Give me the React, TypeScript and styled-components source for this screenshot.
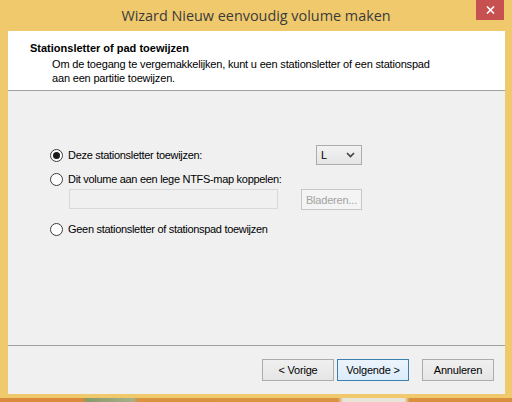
import React from "react"
import styled, { createGlobalStyle } from "styled-components"

const GlobalStyle = createGlobalStyle`
  html, body {
    margin: 0;
    padding: 0;
    width: 512px;
    height: 402px;
    overflow: hidden;
  }
  body {
    font-family: "Liberation Sans", Arial, sans-serif;
  }
`

const Frame = styled.div`
  width: 512px;
  height: 402px;
  display: flex;
  flex-direction: column;
  background: #f0c96d;
`

const TitleBar = styled.div`
  height: 31px;
  display: flex;
  align-items: flex-start;
  padding: 0 8px 0 8px;
  box-sizing: border-box;
`

const Title = styled.div`
  flex: 1;
  text-align: center;
  font-family: "Open Sans", "Noto Sans", sans-serif;
  font-size: 14.4px;
  color: #3b3b3b;
  line-height: 31px;
  padding-left: 28px;
`

const CloseButton = styled.div`
  width: 28px;
  height: 20px;
  background: #c75050;
  display: flex;
  align-items: center;
  justify-content: center;
`

const Client = styled.div`
  margin: 0 7px 0 8px;
  height: 363px;
  display: flex;
  flex-direction: column;
  background: #f0f0f0;
`

const Header = styled.div`
  height: 60px;
  box-sizing: border-box;
  background: #ffffff;
  border-bottom: 1px solid #a0a0a0;
  padding: 11px 0 0 22px;
`

const Heading = styled.div`
  font-weight: bold;
  font-size: 11px;
  color: #000;
  line-height: 13px;
`

const Description = styled.div`
  font-size: 11px;
  color: #000;
  line-height: 14px;
  padding-left: 22px;
  margin-top: 2px;
  letter-spacing: -0.18px;
`

const Body = styled.div`
  flex: 1;
  display: flex;
  flex-direction: column;
  padding: 54px 0 0 42px;
  border-bottom: 1px solid #a0a0a0;
`

const Row = styled.div<{ $height: number; $top?: number }>`
  width: 312px;
  height: ${(p) => p.$height}px;
  margin-top: ${(p) => p.$top ?? 0}px;
  display: flex;
  align-items: center;
  justify-content: space-between;
`

const Option = styled.label`
  display: flex;
  align-items: center;
  gap: 5px;
  font-size: 11px;
  color: #000;
  letter-spacing: -0.3px;
  white-space: nowrap;
`

const Radio = styled.span<{ $checked?: boolean }>`
  width: 11px;
  height: 11px;
  border-radius: 50%;
  border: 1px solid #3c3c3c;
  background: #fff;
  display: flex;
  align-items: center;
  justify-content: center;
  flex: none;
  &::after {
    content: "";
    width: 7px;
    height: 7px;
    border-radius: 50%;
    background: ${(p) => (p.$checked ? "#1a1a1a" : "transparent")};
  }
`

const Select = styled.div`
  width: 46px;
  height: 20px;
  box-sizing: border-box;
  border: 1px solid #acacac;
  background: linear-gradient(#f2f2f2, #e5e5e5);
  display: flex;
  align-items: center;
  justify-content: space-between;
  padding: 0 6px 0 4px;
  font-size: 11px;
  color: #000;
`

const PathRow = styled.div`
  display: flex;
  gap: 23px;
  margin: 2px 0 0 19px;
`

const PathInput = styled.div`
  width: 209px;
  height: 20px;
  box-sizing: border-box;
  border: 1px solid #d9d9d9;
  background: #f0f0f0;
`

const DisabledButton = styled.div`
  width: 61px;
  height: 21px;
  box-sizing: border-box;
  border: 1px solid #c7c7c7;
  background: #f4f4f4;
  color: #a2a2a2;
  font-size: 11px;
  letter-spacing: -0.2px;
  display: flex;
  align-items: center;
  justify-content: center;
`

const Footer = styled.div`
  height: 48px;
  box-sizing: border-box;
  display: flex;
  justify-content: flex-end;
  align-items: flex-start;
  padding: 13px 11px 0 0;
`

const Button = styled.div<{ $focused?: boolean; $gap?: number }>`
  width: 72px;
  height: 22px;
  box-sizing: border-box;
  margin-left: ${(p) => p.$gap ?? 0}px;
  border: 1px solid ${(p) => (p.$focused ? "#3c7fb1" : "#acacac")};
  background: ${(p) =>
    p.$focused ? "linear-gradient(#ecf4fc, #dcecfc)" : "linear-gradient(#f0f0f0, #e5e5e5)"};
  font-size: 11px;
  color: #000;
  letter-spacing: -0.2px;
  display: flex;
  align-items: center;
  justify-content: center;
`

const BottomBorder = styled.div`
  height: 4px;
`

const Taskbar = styled.div`
  height: 4px;
  background: linear-gradient(
    90deg,
    #d98a3c 0%,
    #d98a3c 16%,
    #8a9a6a 17%,
    #a6b08a 26%,
    #d9933f 27%,
    #da9340 66%,
    #e8e4d8 67%,
    #e8e4d8 79%,
    #d98f3e 80%,
    #d98f3e 100%
  );
`

function Chevron() {
  return (
    <svg width="9" height="6" viewBox="0 0 9 6">
      <path d="M1 1 L4.5 4.5 L8 1" fill="none" stroke="#404040" strokeWidth="1.6" />
    </svg>
  )
}

export default function App() {
  return (
    <Frame>
      <GlobalStyle />
      <TitleBar>
        <Title>Wizard Nieuw eenvoudig volume maken</Title>
        <CloseButton>
          <svg width="9" height="8" viewBox="0 0 9 8">
            <path d="M1 0.5 L8 7.5 M8 0.5 L1 7.5" stroke="#ffffff" strokeWidth="1.6" />
          </svg>
        </CloseButton>
      </TitleBar>
      <Client>
        <Header>
          <Heading>Stationsletter of pad toewijzen</Heading>
          <Description>
            Om de toegang te vergemakkelijken, kunt u een stationsletter of een stationspad
            <br />
            aan een partitie toewijzen.
          </Description>
        </Header>
        <Body>
          <Row $height={20}>
            <Option>
              <Radio $checked />
              Deze stationsletter toewijzen:
            </Option>
            <Select>
              <span>L</span>
              <Chevron />
            </Select>
          </Row>
          <Row $height={16} $top={6}>
            <Option>
              <Radio />
              Dit volume aan een lege NTFS-map koppelen:
            </Option>
          </Row>
          <PathRow>
            <PathInput />
            <DisabledButton>Bladeren...</DisabledButton>
          </PathRow>
          <Row $height={16} $top={11}>
            <Option>
              <Radio />
              Geen stationsletter of stationspad toewijzen
            </Option>
          </Row>
        </Body>
        <Footer>
          <Button>&lt; Vorige</Button>
          <Button $focused $gap={3}>Volgende &gt;</Button>
          <Button $gap={13}>Annuleren</Button>
        </Footer>
      </Client>
      <BottomBorder />
      <Taskbar />
    </Frame>
  )
}
